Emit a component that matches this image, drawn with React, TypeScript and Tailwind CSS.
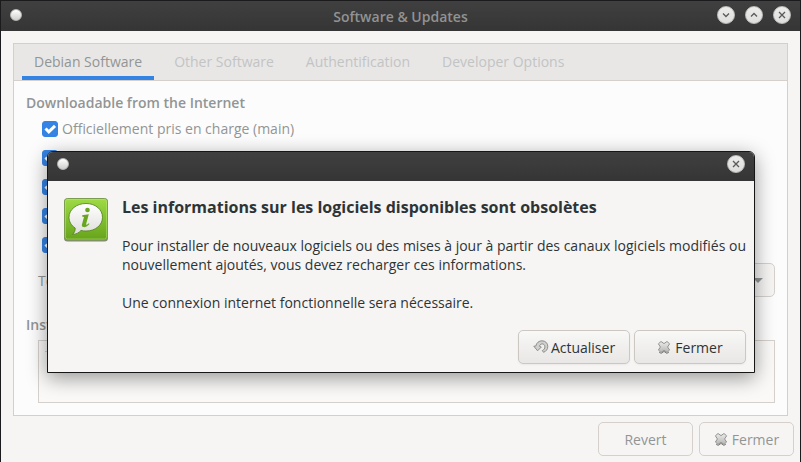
import React, { useState } from 'react'

const tabs = ['Debian Software', 'Other Software', 'Authentification', 'Developer Options']

const sources = [
  'Officiellement pris en charge (main)',
  'Logiciel libre (contrib)',
  'Logiciel non libre (non-free)',
  'Pilotes',
  'Sources',
]

const CloseCross = () => (
  <svg width="14" height="14" viewBox="0 0 14 14" aria-hidden="true" className="shrink-0">
    <defs>
      <linearGradient id="cross" x1="0" y1="0" x2="0" y2="1">
        <stop offset="0" stopColor="#ececeb" />
        <stop offset="1" stopColor="#b4b5b3" />
      </linearGradient>
    </defs>
    <path d="M2.200 12.400 4.200 13.300 7 11.400l2.800 1.900 2-.9" fill="none" stroke="#73756f" />
    <path
      d="M4 1.500 7 3.600l3-2.100 2.600 2.300L10.600 7l2 3-2.600 2.500L7 10.300l-3 2.200L1.400 10l2-3-2-3.200Z"
      fill="url(#cross)"
      stroke="#92948f"
      strokeLinejoin="round"
    />
  </svg>
)

const RefreshArrow = () => (
  <svg width="16" height="14" viewBox="0 0 16 14" aria-hidden="true" className="shrink-0">
    <path
      d="M2.800 6C3.500 2.700 6 .8 9 .8c3.400 0 5.800 2.400 5.800 5.600 0 2.700-1.600 5-4.300 5.900l-1.200-1.700c1.600-.7 2.600-2.100 2.600-3.700C11.900 5 10.700 3.900 9.200 3.900 7.800 3.900 6.700 4.900 6.500 6.300L8.300 7 4.600 10.800.8 6.200Z"
      fill="#d0d0ce"
      stroke="#858782"
      strokeWidth="0.9"
      strokeLinejoin="round"
    />
  </svg>
)

const InfoIcon = () => (
  <svg width="48" height="48" viewBox="0 0 48 48" aria-hidden="true" className="shrink-0">
    <defs>
      <linearGradient id="tile" x1="0" y1="0" x2="0" y2="1">
        <stop offset="0" stopColor="#9edb45" />
        <stop offset="1" stopColor="#66a31b" />
      </linearGradient>
      <linearGradient id="bubble" x1="0" y1="0" x2="0" y2="1">
        <stop offset="0" stopColor="#ffffff" />
        <stop offset="1" stopColor="#dededc" />
      </linearGradient>
    </defs>
    <rect x="2" y="3.500" width="44" height="43" rx="3.500" fill="#55594f" opacity="0.7" />
    <rect x="2.500" y="3.500" width="43" height="41.500" rx="3" fill="url(#tile)" stroke="#7c9c50" />
    <rect x="3.500" y="4.500" width="41" height="39.500" rx="2" fill="none" stroke="#b9ea72" opacity="0.5" />
    <g transform="translate(0 1)">
      <path
        d="M24 7.500c9.500 0 16.500 6 16.500 13.800S33.500 35 24 35c-1.800 0-3.400-.2-5-.6-2 2.400-5 4-8.500 4 1.800-1.500 2.800-3.600 2.700-6.400C9.300 29.500 7 25.700 7 21.300 7 13.500 14.500 7.500 24 7.500Z"
        fill="url(#bubble)"
        stroke="#4e7d14"
        strokeWidth="0.8"
      />
      <circle cx="25.500" cy="14" r="2.300" fill="#69a51e" />
      <path
        d="M20.200 19.300l6.600-1-2.600 9.500c-.3 1.200.2 1.500 2.600-.6l.7.800c-2.500 2.700-4.300 3.300-5.900 3.100-1.600-.2-2-1.400-1.600-2.900l2-7.300-1.900-.4Z"
        fill="#69a51e"
      />
    </g>
  </svg>
)

const Orb = () => (
  <span className="flex h-[18px] items-center">
    <span className="size-3 rounded-full border border-[#b5b5b3] bg-linear-to-b from-white to-[#cfcfcd]" />
  </span>
)

const WindowButton: React.FC<{ label: string; d: string; onClick?: () => void }> = ({ label, d, onClick }) => (
  <button
    type="button"
    aria-label={label}
    onClick={onClick}
    className="flex size-[18px] items-center justify-center rounded-full border border-[#bcbcba] bg-linear-to-b from-[#ececeb] to-[#dededc]"
  >
    <svg width="8" height="8" viewBox="0 0 8 8" fill="none" stroke="#5a5a5a" strokeWidth="1.300">
      <path d={d} />
    </svg>
  </button>
)

const CROSS = 'M1 1l6 6M7 1L1 7'

const App: React.FC = () => {
  const [active, setActive] = useState(0)
  const [open, setOpen] = useState(true)

  return (
    <div className="relative flex min-h-screen flex-col border-x border-t border-[#1b1b1d] bg-[#f6f5f4] font-['Open_Sans','Noto_Sans',sans-serif] text-[14px] leading-[19px] text-[#929595]">
      <header className="grid h-[30px] grid-cols-3 items-start bg-linear-to-b from-[#404040] to-[#353535] px-[9px] pt-[5px]">
        <Orb />
        <h1 className="text-center leading-[22px] font-semibold text-[#929292]">Software &amp; Updates</h1>
        <div className="flex justify-end gap-[10px]">
          <WindowButton label="Minimize" d="M1 2.500l3 3 3-3" />
          <WindowButton label="Maximize" d="M1 5.500l3-3 3 3" />
          <WindowButton label="Close" d={CROSS} />
        </div>
      </header>

      <main className="mx-3 mt-3 flex grow flex-col border border-[#d3d0cc] bg-[#fcfcfc]">
        <nav role="tablist" className="flex h-[37px] shrink-0 gap-2 border-b border-[#d5d0cc] bg-[#e8e7e6] px-2">
          {tabs.map((tab, i) => (
            <button
              key={tab}
              type="button"
              role="tab"
              aria-selected={i === active}
              onClick={() => setActive(i)}
              className={
                i === active
                  ? 'border-b-4 border-[#3584e4] px-3 pt-[2px] text-[#929595]'
                  : 'border-b-4 border-transparent px-3 pt-[2px] text-[#c2c4c4]'
              }
            >
              {tab}
            </button>
          ))}
        </nav>

        <div className="flex grow flex-col p-3">
          <h2 className="font-semibold">Downloadable from the Internet</h2>
          <div className="mt-[7px] flex flex-col gap-[10px] pl-4">
            {sources.map((source) => (
              <label key={source} className="flex items-center gap-1">
                <span className="relative flex size-4">
                  <input
                    type="checkbox"
                    defaultChecked
                    className="peer size-4 appearance-none rounded-[3px] border border-[#cdc7c2] bg-white checked:border-[#3584e4] checked:bg-[#3584e4]"
                  />
                  <svg
                    viewBox="0 0 16 16"
                    className="pointer-events-none absolute inset-0 hidden fill-none stroke-white stroke-3 peer-checked:block"
                  >
                    <path d="M3.500 7.500l3.300 3.300L13 4.800" />
                  </svg>
                </span>
                {source}
              </label>
            ))}
          </div>
          <div className="mt-[9px] flex items-center justify-between pl-3">
            <label htmlFor="server">Télécharger depuis :</label>
            <div className="relative">
              <select
                id="server"
                className="h-[34px] w-[420px] appearance-none rounded-[5px] border border-[#d5d0cc] bg-[#f6f5f4] px-2"
              >
                <option>Serveur principal</option>
              </select>
              <svg width="10" height="5" viewBox="0 0 10 5" className="pointer-events-none absolute top-[15px] right-3 fill-[#929595]">
                <path d="M0 0h10L5 5Z" />
              </svg>
            </div>
          </div>
          <h2 className="mt-[18px] font-semibold">Installable from CD-ROM/DVD</h2>
          <div className="mt-[6px] ml-3 min-h-[63px] grow border border-[#d5d0cc] bg-[#faf9f8] px-[6px] py-[10px]">
            <hr className="w-3 border-[#d5d0cc]" />
          </div>
        </div>
      </main>

      <footer className="flex justify-end gap-[6px] p-[6px]">
        <button type="button" className="h-[34px] w-[95px] rounded-[5px] border border-[#d5d0cc]">
          Revert
        </button>
        <button
          type="button"
          className="flex h-[34px] w-[95px] items-center justify-center gap-1 rounded-[5px] border border-[#d5d0cc]"
        >
          <CloseCross />
          Fermer
        </button>
      </footer>

      {open && (
        <section
          role="dialog"
          aria-labelledby="dialog-title"
          className="absolute top-[150px] right-[45px] left-[46px] rounded-t-md border border-[#161616] bg-[#f6f5f4] text-[#2e3436] shadow-[0_5px_20px_rgba(0,0,0,0.4)]"
        >
          <div className="flex h-[29px] items-start justify-between rounded-t-[5px] bg-linear-to-b from-[#404040] to-[#353535] px-[9px] pt-[3px]">
            <Orb />
            <WindowButton label="Close dialog" d={CROSS} onClick={() => setOpen(false)} />
          </div>
          <div className="flex items-start gap-3 pt-[14px] pl-[14px]">
            <InfoIcon />
            <div>
              <h2 id="dialog-title" className="text-[16px] leading-6 font-bold">
                Les informations sur les logiciels disponibles sont obsolètes
              </h2>
              <p className="mt-[17px]">
                Pour installer de nouveaux logiciels ou des mises à jour à partir des canaux logiciels modifiés ou
                nouvellement ajoutés, vous devez recharger ces informations.
              </p>
              <p className="mt-[19px]">Une connexion internet fonctionnelle sera nécessaire.</p>
            </div>
          </div>
          <div className="mt-[18px] flex justify-end gap-1 px-2 pb-2">
            <button
              type="button"
              className="flex h-[34px] w-28 items-center justify-center gap-[2px] rounded-[5px] border border-[#cdc7c2] bg-linear-to-b from-[#f8f8f7] to-[#e8e7e5] shadow-xs"
            >
              <RefreshArrow />
              Actualiser
            </button>
            <button
              type="button"
              onClick={() => setOpen(false)}
              className="flex h-[34px] w-28 items-center justify-center gap-1 rounded-[5px] border border-[#cdc7c2] bg-linear-to-b from-[#f8f8f7] to-[#e8e7e5] shadow-xs"
            >
              <CloseCross />
              Fermer
            </button>
          </div>
        </section>
      )}
    </div>
  )
}

export default App
